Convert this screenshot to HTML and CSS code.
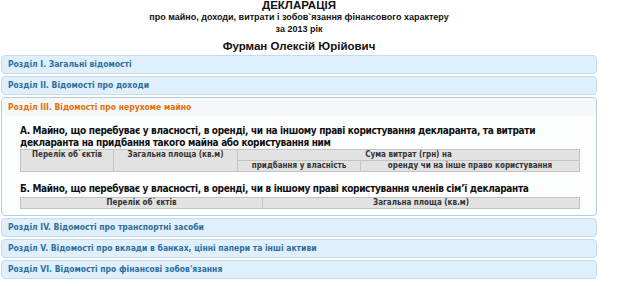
FILE: index.html
```html
<!DOCTYPE html>
<html>
<head>
  <title>Декларація</title>
  <link rel="stylesheet" href="styles.css">
</head>
<body>
  <div class="page">
    <div class="doc-head">
      <h1>ДЕКЛАРАЦІЯ</h1>
      <div class="sub">про майно, доходи, витрати і зобов`язання фінансового характеру</div>
      <div class="sub">за 2013 рік</div>
      <h2>Фурман Олексій Юрійович</h2>
    </div>

    <div class="accordion">
      <div class="acc-head">Розділ I. Загальні відомості</div>
      <div class="acc-head">Розділ II. Відомості про доходи</div>

      <div class="acc-block">
        <div class="acc-head active">Розділ III. Відомості про нерухоме майно</div>
        <div class="acc-content">
          <h3>А. Майно, що перебуває у власності, в оренді, чи на іншому праві користування декларанта, та витрати декларанта на придбання такого майна або користування ним</h3>
          <table class="grid">
            <tr>
              <th rowspan="2" class="c1">Перелік об`єктів</th>
              <th rowspan="2" class="c2">Загальна площа (кв.м)</th>
              <th colspan="2">Сума витрат (грн) на</th>
            </tr>
            <tr>
              <th class="c3">придбання у власність</th>
              <th>оренду чи на інше право користування</th>
            </tr>
          </table>

          <h3 class="b">Б. Майно, що перебуває у власності, в оренді, чи в іншому праві користування членів сім’ї декларанта</h3>
          <table class="grid">
            <tr>
              <th class="half">Перелік об`єктів</th>
              <th>Загальна площа (кв.м)</th>
            </tr>
          </table>
        </div>
      </div>

      <div class="acc-head">Розділ IV. Відомості про транспортні засоби</div>
      <div class="acc-head">Розділ V. Відомості про вклади в банках, цінні папери та інші активи</div>
      <div class="acc-head">Розділ VI. Відомості про фінансові зобов'язання</div>
    </div>
  </div>
</body>
</html>
```

FILE: styles.css
```css
body {
  margin: 0;
  background: #fff;
  font-family: "Liberation Sans", Arial, sans-serif;
  color: #111;
}

.page {
  width: 596px;
  padding-left: 1px;
}

.doc-head {
  text-align: center;
}

h1 {
  margin: -1px 0 0;
  font-size: 11.5px;
  line-height: 12px;
}

.sub {
  font-size: 9px;
  font-weight: bold;
  line-height: 12px;
}

h2 {
  margin: 5px 0 0;
  font-size: 11.5px;
  line-height: 13px;
}

.accordion {
  margin-top: 2px;
  font-family: "DejaVu Sans Condensed", "DejaVu Sans", Verdana, sans-serif;
  font-stretch: condensed;
}

.acc-head {
  height: 17px;
  line-height: 17px;
  margin-bottom: 2px;
  padding-left: 6px;
  border: 1px solid #c5dbec;
  border-radius: 4px;
  background: #dfeffc;
  color: #2e6e9e;
  font-size: 8.5px;
  font-weight: bold;
}

.acc-block {
  margin-bottom: 2px;
  border: 1px solid #b9cde0;
  border-radius: 4px;
  background: #fcfdfd;
}

.acc-block .acc-head.active {
  border: 0;
  margin: 0;
  height: 18px;
  line-height: 18px;
  background: #f5f8f9;
  color: #e17009;
}

.acc-content {
  padding: 9px 16px 6px 18px;
}

h3 {
  margin: 0;
  font-size: 10px;
  letter-spacing: -0.33px;
  line-height: 12px;
  color: #111;
}

h3.b {
  margin-bottom: 2px;
}

.grid {
  width: 100%;
  border-collapse: collapse;
  margin-bottom: 11px;
}

.grid th {
  height: 10px;
  padding: 0;
  border: 1px solid #c4c4c4;
  background: #e2e2e2;
  color: #333;
  font-size: 8px;
  line-height: 10px;
  vertical-align: top;
}

.grid .c1 { width: 92px; }
.grid .c2 { width: 123px; }
.grid .c3 { width: 122px; }
.grid .half { width: 241px; }

.grid:last-child {
  margin-bottom: 0;
}
```
